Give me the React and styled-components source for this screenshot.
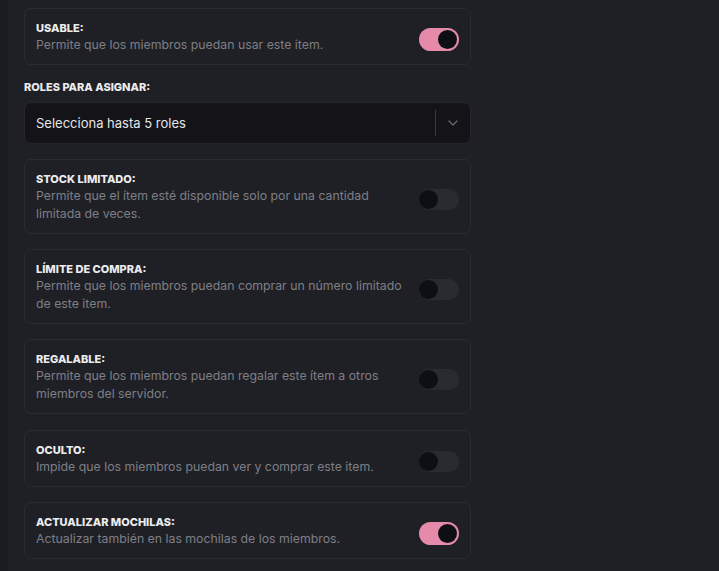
import React, { useState } from "react";
import styled, { createGlobalStyle } from "styled-components";

const GlobalStyle = createGlobalStyle`
  html, body {
    margin: 0;
    padding: 0;
    background: #1f2025;
  }
  body {
    font-family: Inter, "Noto Sans", sans-serif;
    -webkit-font-smoothing: antialiased;
  }
`;

const Page = styled.div`
  display: flex;
  min-height: 571px;
  background: #1f2025;
`;

const SideEdge = styled.div`
  flex: 0 0 8px;
  background: #1a1b1f;
`;

const Main = styled.div`
  flex: 1;
  padding: 8px 0 0 16px;
`;

const Column = styled.div`
  width: 447px;
  display: flex;
  flex-direction: column;
  gap: 15px;
`;

const Card = styled.div`
  display: flex;
  align-items: center;
  gap: 8px;
  border: 1px solid #2b2c31;
  border-radius: 7px;
  padding: 11px 11px 10px 11px;
  margin-bottom: ${(p) => (p.extra ? "1px" : "0")};
`;

const CardText = styled.div`
  flex: 1;
  min-width: 0;
`;

const Title = styled.div`
  font-size: 11px;
  line-height: 16px;
  font-weight: 800;
  color: #ececee;
  text-transform: uppercase;
`;

const Desc = styled.div`
  font-size: 12.3px;
  line-height: 18px;
  color: #7e7f85;
`;

const Track = styled.button`
  flex: 0 0 40px;
  height: ${(p) => (p.on ? "23px" : "21px")};
  margin-top: 5px;
  border: none;
  border-radius: 12px;
  padding: ${(p) => (p.on ? "2px" : "0")};
  display: flex;
  align-items: center;
  justify-content: ${(p) => (p.on ? "flex-end" : "flex-start")};
  background: ${(p) => (p.on ? "#e68aaa" : "#2a2b30")};
  cursor: pointer;
`;

const Knob = styled.span`
  width: 19px;
  height: 19px;
  border-radius: 50%;
  background: #0e0f13;
`;

const Field = styled.div`
  display: flex;
  flex-direction: column;
  gap: 7px;
  margin-top: -1px;
`;

const Label = styled.div`
  font-size: 11px;
  line-height: 16px;
  font-weight: 800;
  color: #ececee;
`;

const Select = styled.div`
  height: 42px;
  box-sizing: border-box;
  display: flex;
  align-items: center;
  background: #141418;
  border: 1px solid #26272c;
  border-radius: 7px;
  padding-left: 11px;
`;

const Placeholder = styled.div`
  flex: 1;
  font-size: 13px;
  color: #e4e4e7;
`;

const Divider = styled.div`
  width: 1px;
  height: 26px;
  background: #3a3b40;
`;

const Chevron = styled.div`
  width: 34px;
  display: flex;
  justify-content: center;
  color: #6b6c72;
`;

const Toggle = ({ initial }) => {
  const [on, setOn] = useState(initial);
  return (
    <Track on={on ? 1 : 0} onClick={() => setOn(!on)}>
      <Knob />
    </Track>
  );
};

const Option = ({ title, desc, on, extra }) => (
  <Card extra={extra ? 1 : 0}>
    <CardText>
      <Title>{title}</Title>
      <Desc>{desc}</Desc>
    </CardText>
    <Toggle initial={on} />
  </Card>
);

const options = [
  {
    title: "Stock limitado:",
    desc: "Permite que el ítem esté disponible solo por una cantidad limitada de veces.",
    on: false,
  },
  {
    title: "Límite de compra:",
    desc: "Permite que los miembros puedan comprar un número limitado de este item.",
    on: false,
  },
  {
    title: "Regalable:",
    desc: "Permite que los miembros puedan regalar este ítem a otros miembros del servidor.",
    on: false,
    extra: true,
  },
  {
    title: "Oculto:",
    desc: "Impide que los miembros puedan ver y comprar este item.",
    on: false,
  },
  {
    title: "Actualizar mochilas:",
    desc: "Actualizar también en las mochilas de los miembros.",
    on: true,
  },
];

export default function App() {
  return (
    <Page>
      <GlobalStyle />
      <SideEdge />
      <Main>
        <Column>
          <Option
            title="Usable:"
            desc="Permite que los miembros puedan usar este item."
            on={true}
          />
          <Field>
            <Label>ROLES PARA ASIGNAR:</Label>
            <Select>
              <Placeholder>Selecciona hasta 5 roles</Placeholder>
              <Divider />
              <Chevron>
                <svg width="10" height="6" viewBox="0 0 10 6" fill="none">
                  <path
                    d="M1 1L5 5L9 1"
                    stroke="currentColor"
                    strokeWidth="1.2"
                    strokeLinecap="round"
                    strokeLinejoin="round"
                  />
                </svg>
              </Chevron>
            </Select>
          </Field>
          {options.map((o) => (
            <Option key={o.title} {...o} />
          ))}
        </Column>
      </Main>
    </Page>
  );
}
